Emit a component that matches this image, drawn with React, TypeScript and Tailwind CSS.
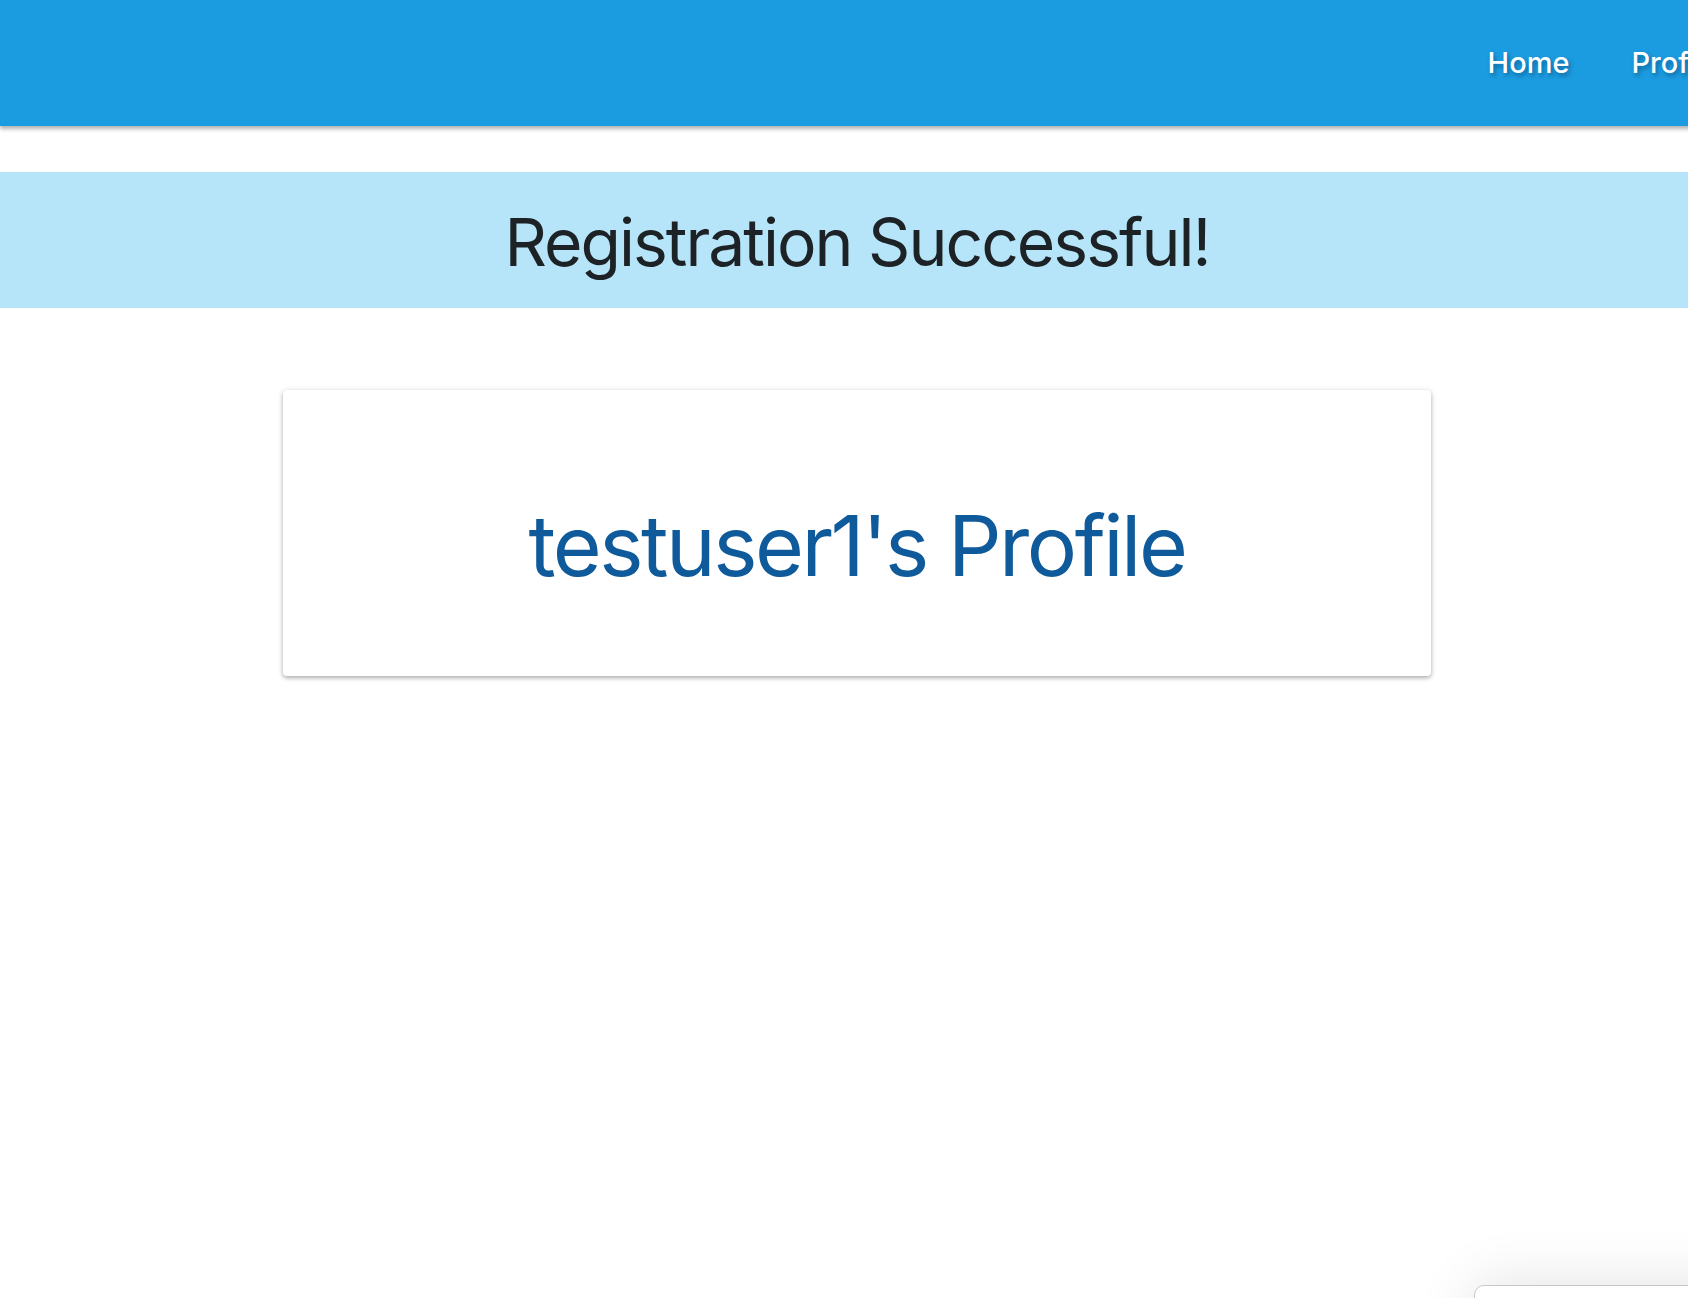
import React from 'react';

const NAV_LINKS = ['Home', 'Profile'];

export default function App() {
  return (
    <div className="relative min-h-screen w-full overflow-hidden bg-white" style={{ fontFamily: 'Inter, "Liberation Sans", sans-serif' }}>
      <div className="w-[1714px]">
        {/* Navbar */}
        <header className="relative z-10 h-[126px] bg-[#1b9ce0] shadow-[0_3px_4px_rgba(0,0,0,0.3)]">
          <nav className="mr-[-7px] flex h-full items-center justify-end gap-[62px]">
            {NAV_LINKS.map((link) => (
              <a
                key={link}
                href="#"
                className="text-[29px] font-medium text-white [text-shadow:2px_3px_4px_rgba(0,40,80,0.45)]"
              >
                {link}
              </a>
            ))}
          </nav>
        </header>

        {/* Success banner */}
        <div className="mt-[46px] flex h-[136px] items-center justify-center bg-[#b6e5f9] pt-[4px]">
          <h1 className="text-[66px] font-normal tracking-[-2px] text-[#1c2225]">Registration Successful!</h1>
        </div>

        {/* Profile card */}
        <div className="mx-auto mt-[82px] flex h-[286px] w-[1148px] items-center justify-center rounded-[4px] bg-white pt-[26px] shadow-[0_2px_4px_rgba(0,0,0,0.3),0_0_8px_rgba(0,0,0,0.06)]">
          <h2 className="text-[84px] font-normal tracking-[-2.5px] text-[#0e5a9b]">testuser1's Profile</h2>
        </div>
      </div>

      {/* cut-off popup in the corner */}
      <div className="absolute left-[1474px] top-[1285px] h-[80px] w-[300px] rounded-tl-[10px] border border-[#c8c8c8] bg-white shadow-[0_0_60px_rgba(0,0,0,0.12)]" />
    </div>
  );
}
